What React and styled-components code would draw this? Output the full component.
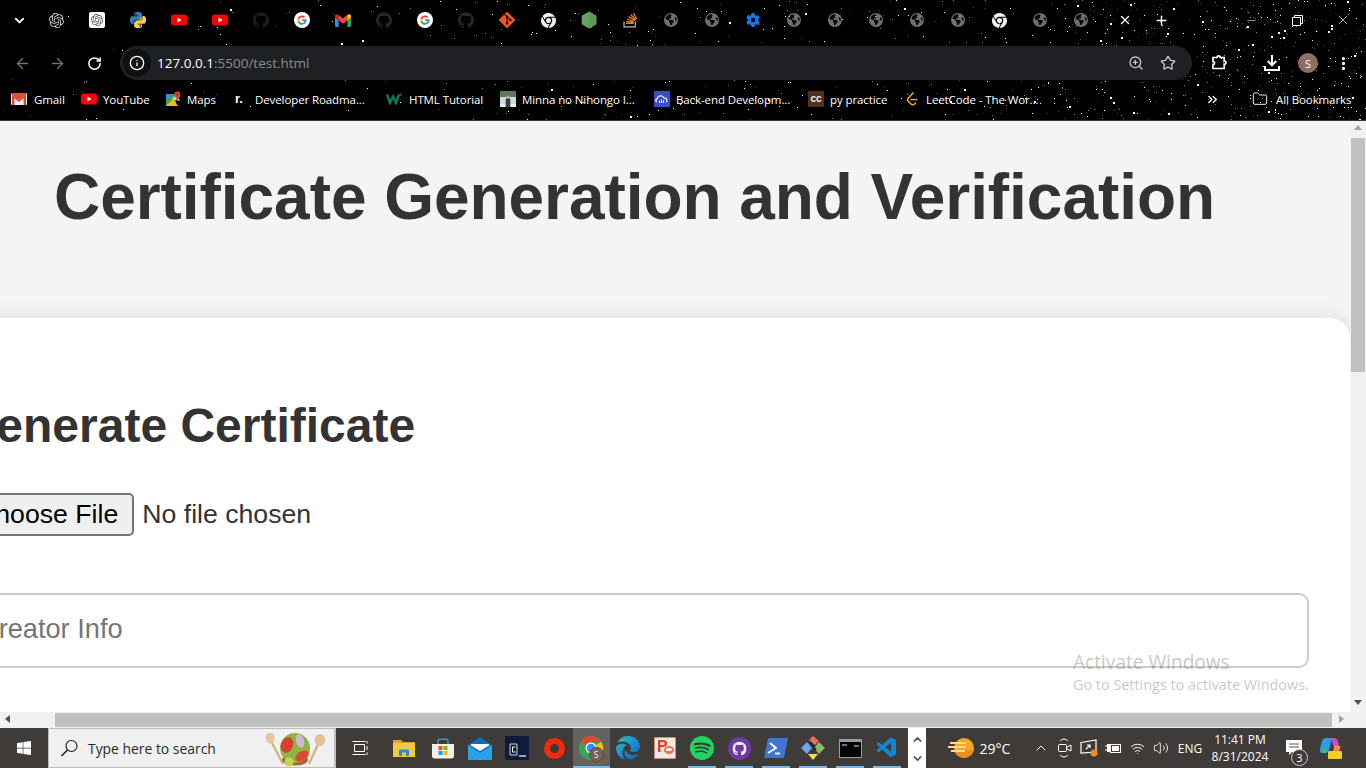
import React from 'react';
import styled, { createGlobalStyle } from 'styled-components';
import { ArrowLeft, ArrowRight, RotateCw, Info, ZoomIn, Star, MoreVertical, Folder, ChevronsRight, ChevronDown, ChevronUp, X, Plus, Minus, Volume2, Wifi } from 'lucide-react';
import { SiOpenai, SiGithub, SiGit, SiSpotify } from 'react-icons/si';
import { FaChrome, FaGear, FaEarthAmericas, FaWindows, FaEdge } from 'react-icons/fa6';
import { VscVscode } from 'react-icons/vsc';

const Global = createGlobalStyle`
  html, body { margin: 0; padding: 0; height: 100%; overflow: hidden; background: #000; }
  #root { height: 100%; }
  * { box-sizing: border-box; }
`;

const Screen = styled.div`
  width: 1366px; height: 768px; display: flex; flex-direction: column;
  position: relative; overflow: hidden; font-family: "Liberation Sans", Arial, sans-serif;
`;

/* ---------- browser chrome ---------- */
const Chrome = styled.header`
  height: 121px; flex: none; background: #000; position: relative;
  display: flex; flex-direction: column; border-bottom: 1px solid #3a3a3a;
  font-family: "Open Sans", "Noto Sans", sans-serif; color: #fff;
`;
const StarField = styled.svg`position: absolute; inset: 0; width: 100%; height: 100%;`;
const TabStrip = styled.div`height: 40px; display: flex; align-items: center; padding-left: 7px; position: relative;`;
const TabMenu = styled.div`width: 24px; margin-right: 4.5px; display: flex; justify-content: center;`;
const Tab = styled.div`width: 41px; height: 16px; flex: none; display: flex; justify-content: center; align-items: center;`;
const TabClose = styled.div`width: 16px; margin-left: 15.5px; display: flex; justify-content: center;`;
const NewTab = styled.div`width: 16px; margin-left: 20px; display: flex; justify-content: center;`;
const WindowControls = styled.div`margin-left: auto; display: flex;`;
const WinBtn = styled.div`width: 46px; display: flex; justify-content: center; align-items: center;`;
const Toolbar = styled.div`height: 46px; padding: 6px 0; display: flex; align-items: center; position: relative;`;
const NavBtn = styled.div`width: ${p => p.$w}px; flex: none; display: flex; justify-content: center; color: ${p => p.$dim ? '#6f7072' : '#fff'};`;
const Omnibox = styled.div`
  width: 1072px; height: 34px; margin-left: ${p => p.$ml || 0}px; border-radius: 17px; background: #1f2023; flex: none;
  display: flex; align-items: center; padding: 0 16px 0 3px; font-size: 13.5px;
`;
const InfoChip = styled.div`width: 28px; height: 28px; border-radius: 50%; background: #0f1011; display: flex; align-items: center; justify-content: center; margin-right: 6px;`;
const Host = styled.span`color: #fff;`;
const UrlRest = styled.span`color: #8b8c8e;`;
const OmniActions = styled.div`margin-left: auto; display: flex; gap: 16px; align-items: center; color: #c4c7c5;`;
const Avatar = styled.div`width: 20px; height: 20px; border-radius: 50%; background: #8d6e63; color: #fff; font-size: 11px; display: flex; align-items: center; justify-content: center;`;
const Bookmarks = styled.nav`height: 26px; display: flex; align-items: center; padding-left: 11px; position: relative; font-size: 11.5px; letter-spacing: -.1px;`;
const Bookmark = styled.div`
  display: flex; align-items: center; width: ${p => p.$w}px; flex: none; gap: ${p => p.$gap ?? 7}px; white-space: nowrap; overflow: hidden;
  svg { flex: none; }
`;
const AllBookmarks = styled(Bookmark)`margin: 0 14px 0 32px;`;
const BmIcon = styled.div`width: 16px; height: 16px; flex: none; display: flex; align-items: center; justify-content: center;`;
const RoadmapMark = styled.span`font-weight: 800; font-size: 13px; font-family: "Liberation Sans", sans-serif; line-height: 16px;`;
const CcMark = styled.div`width: 16px; height: 16px; background: #4f3222; color: #eee; border-radius: 1px; font: 700 10px/16px "Liberation Sans", sans-serif; text-align: center;`;
const BmRight = styled.div`margin-left: auto; display: flex; align-items: center;`;

/* ---------- page ---------- */
const Viewport = styled.main`
  flex: 1; min-height: 0; display: grid; grid-template-columns: 1fr 16px; grid-template-rows: 1fr 16px; background: #f4f4f4;
`;
const PageClip = styled.div`overflow: hidden; min-width: 0; min-height: 0; color: #333;`;
const Title = styled.h1`margin: 0; height: 197px; padding: 39px 0 0 54px; font-size: 64px; line-height: 74px; font-weight: 700; letter-spacing: -.05px; color: #333; white-space: nowrap;`;
const Card = styled.section`
  margin-left: -200px; width: 1550px; height: 500px; background: #fff; border-radius: 20px;
  box-shadow: 0 0 20px rgba(0,0,0,.1); padding: 80px 40px 0 159px;
`;
const SubTitle = styled.h2`margin: 0 0 39px; font-size: 48px; line-height: 56px; font-weight: 700; color: #333; white-space: nowrap;`;
const FileRow = styled.div`display: flex; align-items: center; gap: 8px; height: 43px; font-size: 26.67px; color: #333; margin-bottom: 57px;`;
const FileButton = styled.button`
  height: 43px; padding: 0 14px 0 15px; font: 26.67px "Liberation Sans", sans-serif; color: #000; background: #efefef;
  border: 2px solid #767676; border-radius: 5px;
`;
const TextBox = styled.input`
  display: block; width: 1350px; height: 75px; border: 2px solid #ccc; border-radius: 10px; padding: 0 18px 3px; outline: none;
  font: 27.2px "Liberation Sans", sans-serif; background: #fff;
  &::placeholder { color: #757575; opacity: 1; }
`;
const VBar = styled.div`background: #f1f1f1; display: flex; flex-direction: column; align-items: center; padding: 17px 1px;`;
const VThumb = styled.div`width: 14px; height: 234px; background: #c1c1c1;`;
const HBar = styled.div`background: #f1f1f1; padding: 1px 18px 1px 55px; display: flex;`;
const HThumb = styled.div`flex: 1; background: #c1c1c1;`;
const ScrollCorner = styled.div`background: #f1f1f1;`;
const Arrow = styled.div`
  position: absolute; width: 0; height: 0; border: 4px solid transparent;
  ${p => p.$dir === 'up' && 'left:1354px; top:125px; border-top:0; border-bottom:5px solid #a3a3a3;'}
  ${p => p.$dir === 'down' && 'left:1354px; top:700px; border-bottom:0; border-top:5px solid #505050;'}
  ${p => p.$dir === 'left' && 'left:5px; top:715px; border-left:0; border-right:5px solid #505050;'}
  ${p => p.$dir === 'right' && 'left:1339px; top:715px; border-right:0; border-left:5px solid #a3a3a3;'}
`;
const Watermark = styled.div`position: absolute; left: 1073px; top: 650px; font-family: "Open Sans", "Noto Sans", sans-serif; color: rgba(90,90,90,.35); pointer-events: none; white-space: nowrap;`;
const WmTitle = styled.div`font-size: 19.1px; line-height: 25px;`;
const WmSub = styled.div`font-size: 14.4px; line-height: 20px;`;

/* ---------- taskbar ---------- */
const Taskbar = styled.footer`
  height: 40px; flex: none; background: #3f3b39; display: flex; align-items: stretch; color: #fff;
  font-family: "Open Sans", "Noto Sans", sans-serif;
`;
const StartBtn = styled.div`width: 48px; display: flex; align-items: center; justify-content: center;`;
const SearchBox = styled.div`
  width: 288px; background: #f0f0f0; border: 1px solid #bdbdbd; border-width: 1px 2px 1px 1px; display: flex; align-items: center; color: #2b2b2b; font-size: 13.9px; padding-left: 11px; gap: 9px; position: relative;
`;
const SearchArtWrap = styled.div`position: absolute; right: 3px; top: 0;`;
const TaskSlot = styled.div`
  width: ${p => p.$w || 37}px; flex: none; display: flex; align-items: center; justify-content: center; position: relative;
  background: ${p => p.$active ? 'rgba(255,255,255,.2)' : 'transparent'};
  ${p => p.$run && `&::after { content: ''; position: absolute; left: 4.5px; right: 4.5px; bottom: 0; height: 2px; background: #76b9ed; }`}
  ${p => p.$active && `&::after { content: ''; position: absolute; left: 0; right: 0; bottom: 0; height: 2px; background: #76b9ed; }`}
`;
const ProfileBadge = styled.div`position: absolute; right: 6px; bottom: 6px; width: 15px; height: 15px; border-radius: 50%; background: #7a5f55; border: 1px solid #5b4a44; color: #eee; font-size: 8.5px; line-height: 13px; text-align: center;`;
const Strip = styled.div`width: 18px; margin-left: 2.5px; flex: none; background: #fff; color: #555; display: flex; flex-direction: column; align-items: center; justify-content: space-between; padding: 5px 0 3px;`;
const Tray = styled.div`flex: 1; display: flex; align-items: center; font-size: 12px;`;
const TraySlot = styled.div`width: ${p => p.$w || 24}px; margin-left: ${p => p.$ml || 0}px; flex: none; display: flex; align-items: center; justify-content: center; position: relative; white-space: nowrap; color: #fff;`;
const Temp = styled.span`font-size: 14px;`;
const Clock = styled.div`text-align: center; line-height: 17px; font-size: 12px;`;
const Badge = styled.div`position: absolute; right: 3px; bottom: -9px; width: 17px; height: 17px; border-radius: 50%; border: 1px solid #ccc; background: #3f3b39; font-size: 11px; line-height: 15px; text-align: center;`;
const HiddenDefs = styled.svg`position: absolute; width: 0; height: 0;`;

/* ---------- data ---------- */
let seed = 7;
const rnd = () => { seed = (seed * 16807) % 2147483647; return seed / 2147483647; };
const stars = [];
for (let i = 0; i < 1500; i++) {
  const x = Math.pow(rnd(), 0.62) * 1366;
  const y = rnd() * 120;
  const boost = x > 1050 ? 1 : x > 500 ? 0.55 : 0.35;
  if (rnd() > boost) continue;
  const b = rnd();
  stars.push({ x: Math.round(x), y: Math.round(y), s: b > .93 ? 2 : 1, c: b > .6 ? '#ffffff' : b > .3 ? '#8fa4e0' : '#4a5a9a', o: b > .6 ? 1 : .8 });
}

/* ---------- icons ---------- */
const PY = "M14.25.18l.9.2.73.26.59.3.45.32.34.34.25.34.16.33.1.3.04.26.02.2-.01.13V8.5l-.05.63-.13.55-.21.46-.26.38-.3.31-.33.25-.35.19-.35.14-.33.1-.3.07-.26.04-.21.02H8.77l-.69.05-.59.14-.5.22-.41.27-.33.32-.27.35-.2.36-.15.37-.1.35-.07.32-.04.27-.02.21v3.06H3.17l-.21-.03-.28-.07-.32-.12-.35-.18-.36-.26-.36-.36-.35-.46-.32-.59-.28-.73-.21-.88-.14-1.05-.05-1.23.06-1.22.16-1.04.24-.87.32-.71.36-.57.4-.44.42-.33.42-.24.4-.16.36-.1.32-.05.24-.01h.16l.06.01h8.16v-.83H6.18l-.01-2.75-.02-.37.05-.34.11-.31.17-.28.25-.26.31-.23.38-.2.44-.18.51-.15.58-.12.64-.1.71-.06.77-.04.84-.02 1.27.05zm-6.3 1.98l-.23.33-.08.41.08.41.23.34.33.22.41.09.41-.09.33-.22.23-.34.08-.41-.08-.41-.23-.33-.33-.22-.41-.09-.41.09zm13.09 3.95l.28.06.32.12.35.18.36.27.36.35.35.47.32.59.28.73.21.88.14 1.04.05 1.23-.06 1.23-.16 1.04-.24.86-.32.71-.36.57-.4.45-.42.33-.42.24-.4.16-.36.09-.32.05-.24.02-.16-.01h-8.22v.82h5.84l.01 2.76.02.36-.05.34-.11.31-.17.29-.25.25-.31.24-.38.2-.44.17-.51.15-.58.13-.64.09-.71.07-.77.04-.84.01-1.27-.04-1.07-.14-.9-.2-.73-.25-.59-.3-.45-.33-.34-.34-.25-.34-.16-.33-.1-.3-.04-.25-.02-.2.01-.13v-5.34l.05-.64.13-.54.21-.46.26-.38.3-.32.33-.24.35-.2.35-.14.33-.1.3-.06.26-.04.21-.02.13-.01h5.84l.69-.05.59-.14.5-.21.41-.28.33-.32.27-.35.2-.36.15-.36.1-.35.07-.32.04-.28.02-.21V6.07h2.09l.14.01zm-6.47 14.25l-.23.33-.08.41.08.41.23.33.33.23.41.08.41-.08.33-.23.23-.33.08-.41-.08-.41-.23-.33-.33-.23-.41-.08-.41.08z";
const Python = () => (<svg width="16" height="16" viewBox="0 0 24 24"><path d={PY} fill="url(#pyGrad)" /></svg>);
const YouTube = () => (<svg width="16" height="12" viewBox="0 0 16 12"><rect width="16" height="11" y=".5" rx="3" fill="#f00" /><path d="M6.4 3.5 10.6 6 6.4 8.5z" fill="#fff" /></svg>);
const Google = () => (<svg width="16" height="16" viewBox="0 0 16 16"><circle cx="8" cy="8" r="8" fill="#fff" /><g transform="translate(2.8 2.8) scale(.217)"><path fill="#4285F4" d="M45.1 24.5c0-1.6-.1-3.1-.4-4.5H24v8.5h11.8c-.5 2.7-2.1 5-4.4 6.6v5.5h7.1c4.2-3.8 6.6-9.5 6.6-16.1z"/><path fill="#34A853" d="M24 46c5.9 0 10.9-2 14.5-5.4l-7.1-5.5c-2 1.3-4.5 2.1-7.4 2.1-5.7 0-10.5-3.8-12.2-9H4.5v5.7C8.1 41.1 15.5 46 24 46z"/><path fill="#FBBC05" d="M11.8 28.7c-.4-1.3-.7-2.7-.7-4.2s.3-2.9.7-4.2v-5.7H4.5C3 17.6 2.2 20.9 2.2 24.5s.8 6.9 2.3 9.9z"/><path fill="#EA4335" d="M24 11.3c3.2 0 6.1 1.1 8.4 3.3l6.3-6.3C34.9 4.8 29.9 2.7 24 2.7 15.5 2.7 8.1 7.9 4.5 14.6l7.3 5.7c1.7-5.2 6.5-9 12.2-9z"/></g></svg>);
const GmailM = () => (<svg width="16" height="13" viewBox="0 0 16 13"><path d="M0 3v8.7c0 .7.5 1.2 1.2 1.2H3.6V6.5z" fill="#4285f4"/><path d="M16 3v8.7c0 .7-.5 1.2-1.2 1.2h-2.4V6.5z" fill="#34a853"/><path d="M3.6 6.5 0 3.6V2C0 .5 1.7-.3 2.9.6L8 4.5z" fill="#c5221f"/><path d="M12.4 6.5 16 3.6V2C16 .5 14.3-.3 13.1.6L8 4.5v3.7z" fill="#fbbc04"/><path d="M3.6 1.2 8 4.5l4.4-3.3v5.3L8 9.8 3.6 6.5z" fill="#ea4335"/></svg>);
const Node = () => (<svg width="16" height="18" viewBox="0 0 16 18"><path d="M8 .5 15.3 4.7v8.6L8 17.5.7 13.3V4.7z" fill="#68a063"/><path d="M8 .5 15.3 4.7v8.6L8 17.5z" fill="#5b9a55"/></svg>);
const Stack = () => (<svg width="16" height="16" viewBox="0 0 16 16"><path d="M2 9.5v5.3h11.3V9.5" fill="none" stroke="#bcbbbb" strokeWidth="1.2"/><path d="M4 11.3h7.5M4.2 9.4l7.3 1M5 7l6.8 2.5M6.6 4.6l6.3 3.8M8.8 2.5l4.9 5.4M11.6 1l2.9 6" stroke="#f48024" strokeWidth="1.3" fill="none"/></svg>);
const Globe = () => <FaEarthAmericas size={14} color="#6f6f6f" />;
const GmailBm = () => (<svg width="16" height="12" viewBox="0 0 16 12"><rect width="16" height="12" rx="1" fill="#f2f2f2"/><path d="M1 12V1.4L8 7l7-5.6V12h-2.4V5.2L8 9 3.4 5.2V12z" fill="#d8473a"/><path d="M0 1 8 7l8-6V0H0z" fill="#e14a3d"/></svg>);
const Maps = () => (<svg width="16" height="16" viewBox="0 0 16 16"><path d="M1 3h10v12H1z" fill="#34a853"/><path d="M1 15l7-7 5 7z" fill="#fbbc04"/><path d="M1 3h6L1 9z" fill="#4285f4"/><path d="M7 8l5-5 3 7z" fill="#cfd8dc"/><circle cx="12.3" cy="3.6" r="3" fill="#ea4335"/><circle cx="12.3" cy="3.6" r="1" fill="#7a1f18"/><path d="M10 5.5 12.3 10l2.3-4.5z" fill="#ea4335"/></svg>);
const W3 = () => (<svg width="16" height="12" viewBox="0 0 16 12"><path d="M1 1.5 4 10l3-6.5L10 10l3-8.5" fill="none" stroke="#0a7d5c" strokeWidth="2.4"/><circle cx="14.6" cy="1.8" r="1" fill="#0a7d5c"/></svg>);
const Photo = () => (<svg width="16" height="16" viewBox="0 0 16 16"><rect width="16" height="16" fill="#d4d9cf"/><rect width="16" height="6" fill="#5b7a5c"/><rect y="13" width="16" height="3" fill="#eceeea"/><circle cx="8" cy="6" r="1.6" fill="#c7a58b"/><path d="M5.7 16V8.5c0-.6.5-1 1-1h2.6c.5 0 1 .4 1 1V16z" fill="#2e3a4d"/></svg>);
const CloudBm = () => (<svg width="16" height="16" viewBox="0 0 16 16"><rect width="16" height="16" fill="#3b4fc4"/><path d="M3 11c-1.6-.4-1.8-3 .3-3.4C3.7 5.5 6 4 8.3 5.2c1 .4 1.5 1.2 1.8 2 2.5-.2 3.6 2.5 2.3 3.8" fill="none" stroke="#fff" strokeWidth="1.2"/><path d="M5.5 12V9.5M7.5 12V8.5M9.5 12V9.5" stroke="#fff" strokeWidth="1.1"/></svg>);
const LeetCode = () => (<svg width="16" height="16" viewBox="0 0 16 16"><path d="M9.5 1.5 4.3 7c-1 1.1-1 2.3 0 3.3L7 13c1 1 2.6 1 3.6 0l1.4-1.4" fill="none" stroke="#ffa116" strokeWidth="1.5"/><path d="M6.5 8.6h7" stroke="#b3b3b3" strokeWidth="1.4"/></svg>);
const Puzzle = () => (<svg width="18" height="18" viewBox="0 0 18 18" fill="none" stroke="#fff" strokeWidth="1.7"><path d="M3 3.5h4c0-2.3 3.2-2.3 3.2 0h4v3.7c2.3 0 2.3 3.2 0 3.2v4.1H3v-4c2 .2 2-3.2 0-3z"/><path d="M7 7.5h.1M7 11h.1" strokeWidth="1.8"/></svg>);
const Restore = () => (<svg width="11" height="11" viewBox="0 0 11 11" fill="none" stroke="#fff"><path d="M.5 2.5h8v8h-8zM2.5 2.5v-2h8v8h-2"/></svg>);
const DownloadIcon = () => (<svg width="18" height="18" viewBox="0 0 18 18" fill="none" stroke="#fff" strokeWidth="2"><path d="M9 1v10M4.7 7 9 11.3 13.3 7M2 12v4h14v-4"/></svg>);
const SearchGlass = () => (<svg width="19" height="19" viewBox="0 0 19 19" fill="none" stroke="#222" strokeWidth="1.2"><circle cx="11.5" cy="7" r="5.5"/><path d="M7.5 11 1.5 17" strokeWidth="1.6"/></svg>);
const TaskView = () => (<svg width="17" height="16" viewBox="0 0 17 16" fill="none" stroke="#fff"><path d="M2.5 4.5h10v7h-10zM.5 1.5h13M.5 14.5h13M15 1v2.5M15 6v4M15 12.5V15" /></svg>);
const Explorer = () => (<svg width="22" height="18" viewBox="0 0 22 18"><path d="M0 1h8l2 2h12v15H0z" fill="#d9a72b"/><path d="M0 4h22v14H0z" fill="#f5c843"/><path d="M6 17v-5c0-1 .5-1.5 1.5-1.5h7c1 0 1.5.5 1.5 1.5v5h-3v-3.5H9V17z" fill="#1f8fd9"/></svg>);
const Store = () => (<svg width="24" height="24" viewBox="0 0 24 24"><path d="M7 8V5c0-1 .7-1.8 1.7-1.8h6.6c1 0 1.7.8 1.7 1.8v3" fill="none" stroke="#1ba1e2" strokeWidth="1.5"/><path d="M1 8h22v12c0 1.5-1 2.5-2.5 2.5h-17C2 22.5 1 21.5 1 20z" fill="#f4f1ec"/><rect x="7.5" y="10" width="4" height="4" fill="#f25022"/><rect x="12.5" y="10" width="4" height="4" fill="#7fba00"/><rect x="7.5" y="15" width="4" height="4" fill="#00a4ef"/><rect x="12.5" y="15" width="4" height="4" fill="#ffb900"/></svg>);
const Mail = () => (<svg width="24" height="24" viewBox="0 0 24 24"><path d="M12 1 24 9v13H0V9z" fill="#0b6ec4"/><path d="M0 9v15h24V9L12 17z" fill="#27a3ea"/><path d="M3 8h18v1.5L12 15 3 9.5z" fill="#fff" /></svg>);
const Clion = () => (<svg width="24" height="24" viewBox="0 0 24 24"><rect width="24" height="24" fill="#0f1b3a"/><path d="M5 8h7v11H5z" fill="none" stroke="#cfd4dc"/><path d="M10.5 11H7.5v5h3" fill="none" stroke="#fff"/><path d="M14 20h7" stroke="#cfd4dc" strokeWidth="1.5"/></svg>);
const RedRing = () => (<svg width="21" height="21" viewBox="0 0 21 21"><circle cx="10.5" cy="10.5" r="7.5" fill="none" stroke="#f52a0b" strokeWidth="6"/></svg>);
const ChromeColor = () => (<svg width="24" height="24" viewBox="0 0 24 24"><circle cx="12" cy="12" r="12" fill="#34a853"/><path d="M12 0a12 12 0 0 1 10.4 6H12a6 6 0 0 0-5.2 3L1.6 6A12 12 0 0 1 12 0z" fill="#ea4335"/><path d="M22.4 6A12 12 0 0 1 12 24l5.2-9A6 6 0 0 0 17 9z" fill="#fbbc04"/><circle cx="12" cy="12" r="5.5" fill="#fff"/><circle cx="12" cy="12" r="4.3" fill="#4285f4"/></svg>);
const Ppt = () => (<svg width="22" height="22" viewBox="0 0 22 22"><rect width="22" height="22" fill="#f4e7df"/><rect width="22" height="22" fill="none" stroke="#a83a14"/><path d="M4 3h5c3 0 4 1.5 4 3.5S12 10 9 10H6.5v5H4zm2.5 2v3H9c1 0 1.5-.5 1.5-1.5S10 5 9 5z" fill="#d24726"/><ellipse cx="15" cy="13" rx="5" ry="4" fill="#e8704a"/><ellipse cx="15" cy="12.5" rx="3" ry="1.5" fill="#fff"/></svg>);
const Pwsh = () => (<svg width="24" height="20" viewBox="0 0 24 20"><path d="M4 0h20l-4 20H0z" fill="#3f76d1"/><path d="M6 5l6 5-8 5" fill="none" stroke="#fff" strokeWidth="1.8"/><path d="M11 15.5h5" stroke="#fff" strokeWidth="1.8"/></svg>);
const GitGui = () => (<svg width="26" height="26" viewBox="0 0 26 26"><path d="M13 7 19 13l-6 6-6-6z" fill="#3c3836"/><path d="M7 7 1 13l6 6 5-6z" fill="#6ea6ee"/><path d="M19 7l6 6-6 6-5-6z" fill="#8bbb5a"/><path d="M13 19l-5 0 5 6 5-6z" fill="#f0d85c"/><path d="M9 5l4-4 6 5-4 4z" fill="#e86a6a"/><path d="M10 7 16 15" stroke="#222" strokeWidth="1.5"/></svg>);
const Cmd = () => (<svg width="23" height="19" viewBox="0 0 23 19"><rect width="23" height="19" fill="#9c9c9c"/><rect x="1" y="3" width="21" height="15" fill="#050505"/><path d="M3 6h5M15 7h5" stroke="#ddd" /></svg>);
const Weather = () => (<svg width="26" height="22" viewBox="0 0 26 22"><circle cx="16" cy="11" r="10" fill="#f5a623"/><circle cx="16" cy="11" r="10" fill="#ec8c22" clipPath="url(#wBottom)"/><path d="M2 6h16M0 10h18M3 14h14" stroke="#ffdc8a" strokeWidth="2.2"/></svg>);
const Meet = () => (<svg width="14" height="20" viewBox="0 0 14 20" fill="none" stroke="#fff"><path d="M2 3a5 5 0 0 1 8 0M2 17a5 5 0 0 0 8 0"/><rect x=".5" y="6.5" width="8" height="7" rx="1"/><path d="M9 9l4-2v6l-4-2"/></svg>);
const ScreenTray = () => (<svg width="18" height="18" viewBox="0 0 18 18" fill="none" stroke="#fff" strokeWidth="1.2"><path d="M1 3.5 16 1v12L1 14z"/><path d="M6 10l4-4M7 6h3v3"/><circle cx="14" cy="14" r="3.5" fill="#f28c1e" stroke="none"/></svg>);
const BatteryTray = () => (<svg width="16" height="11" viewBox="0 0 16 11"><path d="M0 3h2M0 7h2" stroke="#fff"/><rect x="2" y="1" width="3" height="8" fill="#fff"/><rect x="5.5" y="1.5" width="10" height="8" fill="none" stroke="#fff"/><rect x="7" y="3" width="7" height="5" fill="#fff"/></svg>);
const Notes = () => (<svg width="17" height="17" viewBox="0 0 17 17"><path d="M0 0h16v12H6l-3 3v-3H0z" fill="#fff"/><path d="M3 4h10M3 7h10" stroke="#555"/></svg>);
const Copilot = () => (<svg width="24" height="24" viewBox="0 0 24 24"><path d="M7 2h6l-3 12c-.5 2-2 3-4 3H3C1 17 .5 15 1 13l2-8c.4-2 2-3 4-3z" fill="#2b9ce8"/><path d="M10 2h5c2 0 3.5 1.5 4 3.5l1.5 6-6-1-2-6z" fill="#c04fd1"/><path d="M6 17h10c3 0 4.5-2 5-4l.5-3-6-.5-2 7.5z" fill="#f2883a"/><path d="M3 12l5 1-1 4H4z" fill="#3bc46b"/><rect x="9" y="15" width="14" height="8" rx="1" fill="#f3d020"/></svg>);
const Salad = () => (
  <svg width="66" height="38" viewBox="0 0 66 38">
    <path d="M5 10 18 35M55 11 44 35" stroke="#d8ad7c" strokeWidth="2.2" />
    <ellipse cx="5" cy="9" rx="4.5" ry="5.5" fill="#e8c49a" />
    <ellipse cx="55" cy="11" rx="5.5" ry="6" fill="#e8bf94" />
    <ellipse cx="30" cy="31" rx="13" ry="5.5" fill="#a8662e" />
    <circle cx="30" cy="19" r="15" fill="#8cb543" />
    <ellipse cx="22" cy="16" rx="6" ry="8" transform="rotate(20 22 16)" fill="#d8402b" />
    <ellipse cx="37" cy="27" rx="7.5" ry="4.5" transform="rotate(-30 37 27)" fill="#dc4a31" />
    <ellipse cx="35" cy="12" rx="4" ry="7" transform="rotate(-15 35 12)" fill="#cdb9d3" />
    <circle cx="24" cy="33" r="4.5" fill="#bfd659" />
  </svg>
);

const OpenAiTile = () => (<svg width="16" height="16" viewBox="0 0 16 16"><rect width="16" height="16" rx="2" fill="#fff" /><g transform="translate(2 2)"><SiOpenai size={12} color="#555" /></g></svg>);
const GithubCircle = () => (<svg width="23" height="23" viewBox="0 0 23 23"><circle cx="11.5" cy="11.5" r="11.5" fill="#6e3aa6" /><g transform="translate(4.5 4.5)"><SiGithub size={14} color="#f4eefa" /></g></svg>);

const tabIcons = [
  <SiOpenai size={15} color="#c9c9c9" />, <OpenAiTile />,
  <Python />, <YouTube />, <YouTube />,
  <SiGithub size={16} color="#1b1b1b" />, <Google />, <GmailM />,
  <SiGithub size={16} color="#24282c" />, <Google />, <SiGithub size={16} color="#24282c" />,
  <SiGit size={16} color="#f4502a" />, <FaChrome size={15} color="#f1f1f1" />, <Node />, <Stack />,
  <Globe />, <Globe />, <FaGear size={14} color="#1a73e8" />, <Globe />, <Globe />, <Globe />, <Globe />, <Globe />,
  <FaChrome size={15} color="#f1f1f1" />, <Globe />, <Globe />,
];

const marks = [
  { w: 70, icon: <GmailBm />, text: 'Gmail' },
  { w: 84, icon: <YouTube />, text: 'YouTube', gap: 6 },
  { w: 66, icon: <Maps />, text: 'Maps', gap: 6 },
  { w: 155, icon: <RoadmapMark>r.</RoadmapMark>, text: 'Developer Roadma...', gap: 8 },
  { w: 114, icon: <W3 />, text: 'HTML Tutorial', gap: 7 },
  { w: 154, icon: <Photo />, text: 'Minna no Nihongo I...', gap: 6 },
  { w: 154, icon: <CloudBm />, text: 'Back-end Developm...', gap: 6 },
  { w: 96, icon: <CcMark>cc</CcMark>, text: 'py practice', gap: 6 },
  { w: 160, icon: <LeetCode />, text: 'LeetCode - The Wor...', gap: 6 },
];

const apps = [
  { icon: <Explorer />, w: 40.5 }, { icon: <Store /> }, { icon: <Mail /> }, { icon: <Clion /> }, { icon: <RedRing /> },
  { icon: <><ChromeColor /><ProfileBadge>S</ProfileBadge></>, active: true },
  { icon: <FaEdge size={24} fill="url(#edgeGrad)" /> },
  { icon: <Ppt /> },
  { icon: <SiSpotify size={24} color="#1ed760" />, run: true },
  { icon: <GithubCircle />, run: true },
  { icon: <Pwsh />, run: true },
  { icon: <GitGui />, run: true },
  { icon: <Cmd />, run: true },
  { icon: <VscVscode size={24} color="#0f86d4" />, run: true },
];

export default function App() {
  return (
    <Screen>
      <Global />
      <HiddenDefs aria-hidden="true">
        <defs>
          <linearGradient id="pyGrad" x1="0" y1="0" x2="1" y2="1">
            <stop offset="0.5" stopColor="#3c7cb3" /><stop offset="0.5" stopColor="#f6d04a" />
          </linearGradient>
          <linearGradient id="edgeGrad" x1="0" y1="0" x2="1" y2="1">
            <stop offset="0" stopColor="#38c3b0" /><stop offset="0.5" stopColor="#1a8fd8" /><stop offset="1" stopColor="#0c5aa8" />
          </linearGradient>
          <clipPath id="wBottom"><rect x="0" y="13" width="26" height="9" /></clipPath>
        </defs>
      </HiddenDefs>

      <Chrome>
        <StarField aria-hidden="true">
          {stars.map((s, i) => <rect key={i} x={s.x} y={s.y} width={s.s} height={s.s} fill={s.c} opacity={s.o} />)}
        </StarField>
        <TabStrip>
          <TabMenu><ChevronDown size={15} strokeWidth={3} color="#fff" /></TabMenu>
          {tabIcons.map((ic, i) => <Tab key={i}>{ic}</Tab>)}
          <TabClose><X size={14} strokeWidth={2.4} color="#fff" /></TabClose>
          <NewTab><Plus size={15} strokeWidth={2.2} color="#fff" /></NewTab>
          <WindowControls>
            <WinBtn><Minus size={13} strokeWidth={1} color="#fff" /></WinBtn>
            <WinBtn><Restore /></WinBtn>
            <WinBtn><X size={16} strokeWidth={1} color="#fff" /></WinBtn>
          </WindowControls>
        </TabStrip>
        <Toolbar>
          <NavBtn $w={44} $dim><ArrowLeft size={17} /></NavBtn>
          <NavBtn $w={27} $dim><ArrowRight size={17} /></NavBtn>
          <NavBtn $w={46}><RotateCw size={15} strokeWidth={2.4} /></NavBtn>
          <Omnibox $ml={3}>
            <InfoChip><Info size={16} color="#fff" /></InfoChip>
            <Host>127.0.0.1</Host><UrlRest>:5500/test.html</UrlRest>
            <OmniActions>
              <ZoomIn size={16} />
              <Star size={16} strokeWidth={2} />
            </OmniActions>
          </Omnibox>
          <NavBtn $w={54}><Puzzle /></NavBtn>
          <NavBtn $w={52}><DownloadIcon /></NavBtn>
          <NavBtn $w={20}><Avatar>S</Avatar></NavBtn>
          <NavBtn $w={50}><MoreVertical size={17} strokeWidth={2.6} /></NavBtn>
        </Toolbar>
        <Bookmarks>
          {marks.map(m => (
            <Bookmark key={m.text} $w={m.w} $gap={m.gap}><BmIcon>{m.icon}</BmIcon><span>{m.text}</span></Bookmark>
          ))}
          <BmRight>
            <NavBtn $w={16}><ChevronsRight size={15} strokeWidth={2.2} /></NavBtn>
            <AllBookmarks $w={100} $gap={8}><Folder size={16} strokeWidth={1.5} color="#eee" /><span>All Bookmarks</span></AllBookmarks>
          </BmRight>
        </Bookmarks>
      </Chrome>

      <Viewport>
        <PageClip>
          <Title>Certificate Generation and Verification</Title>
          <Card>
            <SubTitle>Generate Certificate</SubTitle>
            <FileRow><FileButton type="button">Choose File</FileButton><span>No file chosen</span></FileRow>
            <TextBox placeholder="Creator Info" readOnly />
          </Card>
        </PageClip>
        <VBar><VThumb /></VBar>
        <HBar><HThumb /></HBar>
        <ScrollCorner />
      </Viewport>
      <Arrow $dir="up" /><Arrow $dir="down" /><Arrow $dir="left" /><Arrow $dir="right" />
      <Watermark>
        <WmTitle>Activate Windows</WmTitle>
        <WmSub>Go to Settings to activate Windows.</WmSub>
      </Watermark>

      <Taskbar>
        <StartBtn><FaWindows size={16} color="#fff" /></StartBtn>
        <SearchBox><SearchGlass /><span>Type here to search</span><SearchArtWrap><Salad /></SearchArtWrap></SearchBox>
        <TaskSlot $w={48}><TaskView /></TaskSlot>
        {apps.map((a, i) => <TaskSlot key={i} $w={a.w} $active={a.active} $run={a.run}>{a.icon}</TaskSlot>)}
        <Strip><ChevronUp size={13} strokeWidth={3} /><ChevronDown size={13} strokeWidth={3} /></Strip>
        <Tray>
          <TraySlot $w={28} $ml={21}><Weather /></TraySlot>
          <TraySlot $w={36} $ml={2}><Temp>29°C</Temp></TraySlot>
          <TraySlot $ml={16}><ChevronUp size={16} strokeWidth={1.5} /></TraySlot>
          <TraySlot><Meet /></TraySlot>
          <TraySlot><ScreenTray /></TraySlot>
          <TraySlot><BatteryTray /></TraySlot>
          <TraySlot><Wifi size={15} strokeWidth={1.5} /></TraySlot>
          <TraySlot><Volume2 size={16} strokeWidth={1.3} /></TraySlot>
          <TraySlot $w={34}>ENG</TraySlot>
          <TraySlot $w={66}><Clock>11:41 PM<br />8/31/2024</Clock></TraySlot>
          <TraySlot $w={34} $ml={4}><Notes /><Badge>3</Badge></TraySlot>
          <TraySlot $w={36} $ml={2}><Copilot /></TraySlot>
        </Tray>
      </Taskbar>
    </Screen>
  );
}
